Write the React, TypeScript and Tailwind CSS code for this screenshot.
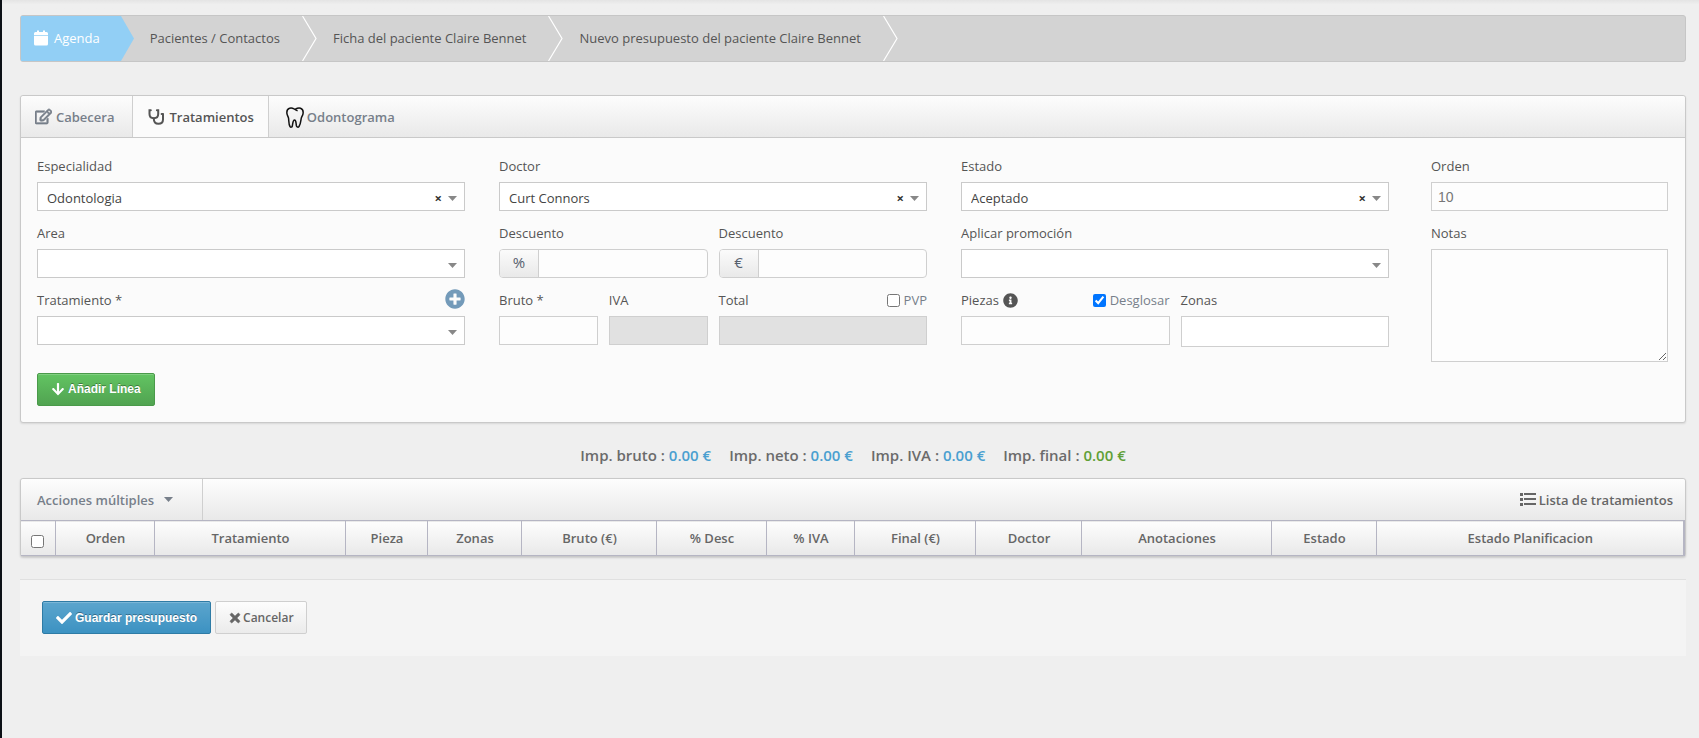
import React, {type ReactElement, type ReactNode} from 'react';
import {
    FaArrowDown,
    FaCheck,
    FaInfoCircle,
    FaPlusCircle,
    FaRegEdit,
    FaTimes,
} from 'react-icons/fa';

const CONTROL =
    'block w-full border border-[#cfcfcf] px-[6px] outline-none text-[#777] rounded-none';

const COLUMNS = [
    {name: 'Orden', width: 99},
    {name: 'Tratamiento', width: 191},
    {name: 'Pieza', width: 82},
    {name: 'Zonas', width: 94},
    {name: 'Bruto (€)', width: 135},
    {name: '% Desc', width: 110},
    {name: '% IVA', width: 88},
    {name: 'Final (€)', width: 121},
    {name: 'Doctor', width: 106},
    {name: 'Anotaciones', width: 190},
    {name: 'Estado', width: 105},
    {name: 'Estado Planificacion', width: 307},
];

const App = (): ReactElement => {
    return (
        <div className="min-h-screen border-l-2 border-[#0c1016] bg-[#efefef] font-['Open_Sans',sans-serif] text-[13px] leading-5 text-[#555]">
            <div className="h-[15px] bg-linear-to-b from-[#e4e4e4] to-[#efefef] to-30%" />
            <div className="ml-[18px] mr-[13px]">
                <Breadcrumb />
                <section className="mt-[33px] rounded-[3px] border border-[#c9c9c9] bg-[#fbfbfb] shadow-[0_1px_2px_rgba(0,0,0,0.1)]">
                    <Tabs />
                    <TreatmentForm />
                </section>
                <Totals />
                <TreatmentTable />
                <div className="mt-[22px] flex gap-1 border-t border-[#e0e0e0] bg-[#f4f4f4] px-[22px] pb-[22px] pt-[21px]">
                    <button
                        type="button"
                        className="flex h-[33px] items-center gap-[3px] rounded-[2px] border border-[#2e7ba5] bg-linear-to-b from-[#5ba5cd] to-[#3c92c2] px-[13px] font-['Liberation_Sans',sans-serif] text-[12px] font-bold text-white shadow-[inset_0_1px_0_rgba(255,255,255,0.2)] text-shadow-[0_-1px_0_rgba(0,0,0,0.35)]">
                        <FaCheck className="size-4" />
                        Guardar presupuesto
                    </button>
                    <button
                        type="button"
                        className="flex h-[33px] items-center gap-px rounded-[2px] border border-[#cfcfcf] bg-linear-to-b from-[#fdfdfd] to-[#ebebeb] px-3 text-[12px] font-semibold text-[#666]">
                        <FaTimes
                            className="size-[14px]"
                            stroke="currentColor"
                            strokeWidth="24"
                        />
                        Cancelar
                    </button>
                </div>
            </div>
        </div>
    );
};

const Breadcrumb = () => {
    return (
        <nav className="flex h-[47px] rounded-[3px] border border-[#c6c6c6] bg-[#d3d3d3]">
            <a
                href="#"
                className="flex items-center gap-[6px] bg-[#92cff5] pb-[2px] pl-[13px] pr-[21px] text-white">
                <CalendarIcon />
                Agenda
            </a>
            <svg className="h-full w-[13px]" viewBox="0 0 13 45" aria-hidden>
                <path d="M0 0L13 22.5L0 45Z" fill="#92cff5" />
            </svg>
            <Crumb>Pacientes / Contactos</Crumb>
            <Crumb>Ficha del paciente Claire Bennet</Crumb>
            <Crumb>Nuevo presupuesto del paciente Claire Bennet</Crumb>
        </nav>
    );
};

const Crumb = ({children}: {children: ReactNode}) => {
    return (
        <>
            <a href="#" className="flex items-center pb-[2px] pl-4 pr-[22px]">
                {children}
            </a>
            <svg className="h-full w-[15px]" viewBox="0 0 15 45" aria-hidden>
                <path
                    d="M0.5 0L14 22.5L0.5 45"
                    fill="none"
                    stroke="#fff"
                    strokeWidth="1.2"
                />
            </svg>
        </>
    );
};

const Tabs = () => {
    return (
        <div
            role="tablist"
            className="flex h-[42px] rounded-t-[3px] border-b border-[#c9c9c9] bg-linear-to-b from-[#fdfdfd] to-[#e9e9e9] font-semibold text-[#777f8a]">
            <button
                type="button"
                role="tab"
                className="flex items-center gap-1 border-r border-[#cfcfcf] pl-[14px] pr-[18px]">
                <EditIcon />
                Cabecera
            </button>
            <button
                type="button"
                role="tab"
                aria-selected
                className="flex items-center gap-1 border-r border-[#cfcfcf] bg-[#fbfbfb] pl-[15px] pr-[14px] text-[#555]">
                <StethoscopeIcon />
                Tratamientos
            </button>
            <button
                type="button"
                role="tab"
                className="flex items-center gap-[3px] pl-[17px] pr-4">
                <ToothIcon />
                Odontograma
            </button>
        </div>
    );
};

const TreatmentForm = () => {
    return (
        <form className="pb-4 pl-4 pr-[17px] pt-[18px]">
            <div className="grid grid-cols-[428fr_428fr_428fr_245fr] gap-x-[34px]">
                <div className="flex flex-col gap-3">
                    <Field id="especialidad" label="Especialidad">
                        <Select id="especialidad" value="Odontologia" />
                    </Field>
                    <Field id="area" label="Area">
                        <Select id="area" />
                    </Field>
                    <Field
                        id="tratamiento"
                        label="Tratamiento *"
                        extra={
                            <button
                                type="button"
                                aria-label="Nuevo tratamiento"
                                className="pb-[2px] text-[#739ab9]">
                                <FaPlusCircle className="size-5" />
                            </button>
                        }>
                        <Select id="tratamiento" />
                    </Field>
                </div>

                <div className="flex flex-col gap-3">
                    <Field id="doctor" label="Doctor">
                        <Select id="doctor" value="Curt Connors" />
                    </Field>
                    <div className="grid grid-cols-2 gap-[11px]">
                        <Field id="descuento-pct" label="Descuento">
                            <Addon id="descuento-pct" symbol="%" />
                        </Field>
                        <Field id="descuento-eur" label="Descuento">
                            <Addon id="descuento-eur" symbol="€" />
                        </Field>
                    </div>
                    <div className="grid grid-cols-2 gap-[11px]">
                        <div className="grid grid-cols-2 gap-[11px]">
                            <Field id="bruto" label="Bruto *">
                                <input
                                    id="bruto"
                                    className={`${CONTROL} h-[29px] bg-[#fdfdfd]`}
                                />
                            </Field>
                            <Field id="iva" label="IVA">
                                <input
                                    id="iva"
                                    readOnly
                                    className={`${CONTROL} h-[29px] bg-[#e1e1e1]`}
                                />
                            </Field>
                        </div>
                        <Field
                            id="total"
                            label="Total"
                            extra={<Check label="PVP" />}>
                            <input
                                id="total"
                                readOnly
                                className={`${CONTROL} h-[29px] bg-[#e1e1e1]`}
                            />
                        </Field>
                    </div>
                </div>

                <div className="flex flex-col gap-3">
                    <Field id="estado" label="Estado">
                        <Select id="estado" value="Aceptado" />
                    </Field>
                    <Field id="promocion" label="Aplicar promoción">
                        <Select id="promocion" />
                    </Field>
                    <div className="grid grid-cols-2 gap-[11px]">
                        <Field
                            id="piezas"
                            label="Piezas"
                            icon={<FaInfoCircle className="size-[15px]" />}
                            extra={<Check label="Desglosar" checked />}>
                            <input
                                id="piezas"
                                className={`${CONTROL} h-[29px] bg-[#fdfdfd]`}
                            />
                        </Field>
                        <Field id="zonas" label="Zonas">
                            <input
                                id="zonas"
                                className={`${CONTROL} h-[31px] bg-white`}
                            />
                        </Field>
                    </div>
                </div>

                <div className="flex flex-col gap-3 pl-2">
                    <Field id="orden" label="Orden">
                        <input
                            id="orden"
                            defaultValue="10"
                            className={`${CONTROL} h-[29px] bg-[#fdfdfd] font-['Liberation_Sans',sans-serif] text-[14px]`}
                        />
                    </Field>
                    <Field id="notas" label="Notas">
                        <textarea
                            id="notas"
                            className={`${CONTROL} h-[113px] resize bg-[#fdfdfd]`}
                        />
                    </Field>
                </div>
            </div>
            <button
                type="button"
                className="mt-[11px] flex h-[33px] items-center gap-[3px] rounded-[2px] border border-[#4a9a4a] bg-linear-to-b from-[#62c462] to-[#51a351] px-[13px] pb-[2px] font-['Liberation_Sans',sans-serif] text-[12px] font-bold text-white shadow-[inset_0_1px_0_rgba(255,255,255,0.2)] text-shadow-[0_-1px_0_rgba(0,0,0,0.35)]">
                <FaArrowDown className="size-[14px]" />
                Añadir Línea
            </button>
        </form>
    );
};

type FieldProps = {
    id: string;
    label: string;
    icon?: ReactNode;
    extra?: ReactNode;
    children: ReactNode;
};

const Field = ({id, label, icon, extra, children}: FieldProps) => {
    return (
        <div>
            <div className="mb-[6px] flex h-5 items-center justify-between">
                <div className="flex items-center gap-1">
                    <label htmlFor={id}>{label}</label>
                    {icon}
                </div>
                {extra}
            </div>
            {children}
        </div>
    );
};

const Select = ({id, value}: {id: string; value?: string}) => {
    return (
        <div className="relative">
            <select
                id={id}
                className="block h-[29px] w-full appearance-none border border-[#cacaca] bg-white pl-[9px] pr-10 pt-[2px] text-[#444] outline-none">
                <option>{value}</option>
            </select>
            {value && (
                <button
                    type="button"
                    aria-label="Limpiar"
                    className="absolute right-[23px] top-[6px] text-[13px] font-bold text-[#333]">
                    ×
                </button>
            )}
            <Caret className="pointer-events-none absolute right-2 top-[14px] text-[#888]" />
        </div>
    );
};

const Addon = ({id, symbol}: {id: string; symbol: string}) => {
    return (
        <div className="flex h-[29px] overflow-hidden rounded-[4px] border border-[#cfcfcf] bg-[#fdfdfd]">
            <span className="flex w-[39px] shrink-0 justify-center border-r border-[#cfcfcf] bg-linear-to-b from-[#fbfbfb] to-[#e9e9e9] pt-[2px] text-[15px] text-[#56606e]">
                {symbol}
            </span>
            <input
                id={id}
                className="w-full min-w-0 px-2 outline-none"
            />
        </div>
    );
};

const Check = ({label, checked}: {label: string; checked?: boolean}) => {
    return (
        <label className="flex items-center gap-1 text-[#777f8a]">
            <input
                type="checkbox"
                defaultChecked={checked}
                className="size-[13px]"
            />
            {label}
        </label>
    );
};

const Totals = () => {
    return (
        <div className="flex h-[55px] items-center justify-center gap-[18px] pt-2 text-[15px] font-semibold text-[#6b6b6b]">
            <Total label="Imp. bruto" />
            <Total label="Imp. neto" />
            <Total label="Imp. IVA" />
            <Total label="Imp. final" final />
        </div>
    );
};

const Total = ({label, final}: {label: string; final?: boolean}) => {
    return (
        <p>
            {label} :{' '}
            <span className={final ? 'text-[#5f9f37]' : 'text-[#4a9fd0]'}>
                0.00 €
            </span>
        </p>
    );
};

const TreatmentTable = () => {
    return (
        <section className="rounded-[3px] border border-[#c9c9c9] bg-[#fbfbfb] font-semibold text-[#666] shadow-[0_1px_2px_rgba(0,0,0,0.15)]">
            <div className="flex h-[41px] items-stretch justify-between rounded-t-[3px] bg-linear-to-b from-[#fdfdfd] to-[#e9e9e9]">
                <button
                    type="button"
                    className="flex items-center gap-[10px] border-r border-[#cfcfcf] pl-4 pr-[29px] text-[#777f8a]">
                    Acciones múltiples
                    <Caret />
                </button>
                <h2 className="flex items-center gap-[3px] pr-3">
                    <ListIcon />
                    Lista de tratamientos
                </h2>
            </div>
            <table className="w-full table-fixed border-collapse">
                <thead>
                    <tr className="h-[35px] border-y border-[#b5b5c3] bg-linear-to-b from-[#fdfdfd] to-[#e9e9e9]">
                        <th style={{width: `${(35 / 1663) * 100}%`}}>
                            <input
                                type="checkbox"
                                aria-label="Seleccionar todo"
                                className="ml-[10px] mt-[7px] block size-[13px]"
                            />
                        </th>
                        {COLUMNS.map(({name, width}) => (
                            <th
                                key={name}
                                style={{width: `${(width / 1663) * 100}%`}}
                                className="border-l border-[#b5b5c3] pb-px font-semibold last:border-r-2">
                                {name}
                            </th>
                        ))}
                    </tr>
                </thead>
            </table>
        </section>
    );
};

const Caret = ({className = ''}: {className?: string}) => {
    return (
        <svg
            className={`h-[5px] w-[9px] ${className}`}
            viewBox="0 0 9 5"
            fill="currentColor"
            aria-hidden>
            <path d="M0 0H9L4.5 5Z" />
        </svg>
    );
};

const CalendarIcon = () => {
    return (
        <svg
            className="h-4 w-[14px]"
            viewBox="0 0 14 16"
            fill="currentColor"
            aria-hidden>
            <path d="M3 0.5h2V2h4V0.5h2V2h1.5Q14 2 14 3.5V5H0V3.5Q0 2 1.5 2H3Z" />
            <path d="M0 5.8H14V14Q14 15.5 12.5 15.5H1.5Q0 15.5 0 14Z" />
        </svg>
    );
};

const EditIcon = () => {
    return (
        <FaRegEdit
            className="size-[17px]"
            stroke="currentColor"
            strokeWidth="22"
        />
    );
};

const StethoscopeIcon = () => {
    return (
        <svg
            className="h-4 w-[17px]"
            viewBox="0 0 17 16"
            fill="none"
            stroke="currentColor"
            strokeWidth="2"
            strokeLinecap="round"
            aria-hidden>
            <path d="M2.8 1.2H1.5V5C1.5 7.6 3.3 9.2 5.8 9.2S10.2 7.6 10.2 5V1.2H8.9" />
            <path d="M5.8 9.5C5.8 13 7.5 14.8 10.4 14.8S15 13 15 10.5V5.5" />
            <path d="M13.6 5H15" />
        </svg>
    );
};

const ToothIcon = () => {
    return (
        <svg
            className="mt-[2px] h-[21px] w-[18px]"
            viewBox="0 0 18 21"
            fill="none"
            stroke="#111"
            strokeWidth="1.5"
            strokeLinejoin="round"
            aria-hidden>
            <path d="M8 1.8C6.5 0.9 4.8 0.7 3.5 1.2C1.2 2 0.6 4.5 1 6.8C1.3 8.7 2.4 9.6 2.6 11.5C2.9 14.5 2.7 17.5 4 19.5C4.7 20.5 6 20.3 6.3 19C6.9 16.5 6.8 13 8.5 13C10.4 13 9.8 16.5 10.5 19C10.9 20.3 12.2 20.5 13 19.5C14.6 17.3 14.7 14.5 15.2 11.5C15.5 9.6 16.7 8.7 17 6.8C17.4 4.5 16.8 2 14.5 1.2C12.6 0.6 10.8 1.3 9 2.3" />
            <path d="M8 1.8C9 2.7 10.2 3.4 11.6 3.8" />
        </svg>
    );
};

const ListIcon = () => {
    return (
        <svg
            className="h-[13px] w-4"
            viewBox="0 0 16 13"
            fill="currentColor"
            aria-hidden>
            <path d="M0 0h3v3H0zM4 0h12v2H4zM0 5h3v3H0zM4 5h12v2H4zM0 10h3v3H0zM4 10h12v2H4z" />
        </svg>
    );
};

export default App;
